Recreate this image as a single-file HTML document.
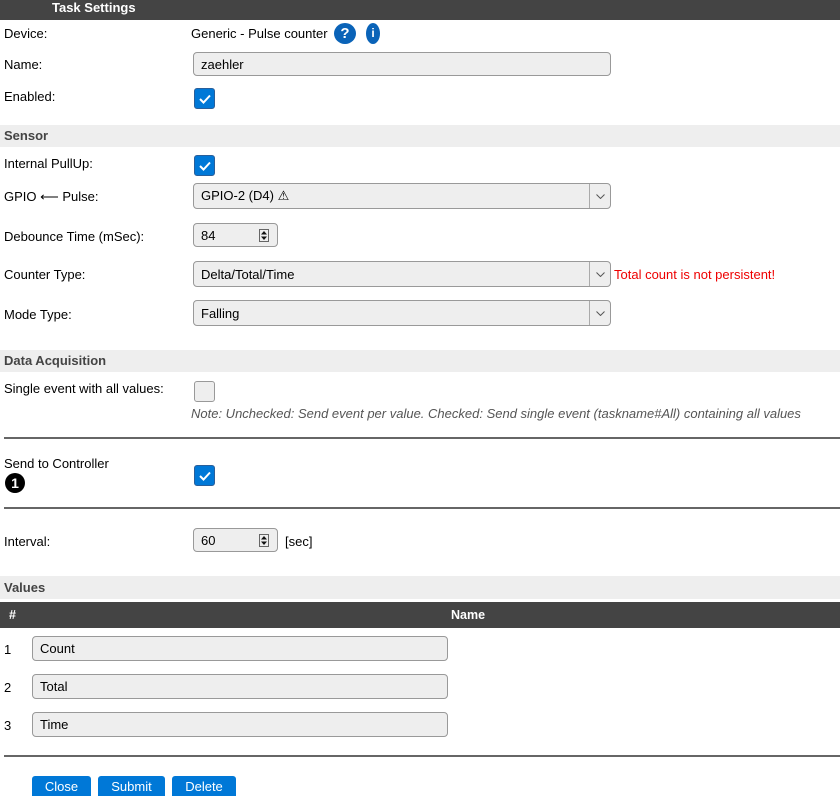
<!DOCTYPE html>
<html><head><meta charset="utf-8"><style>
*{box-sizing:border-box;margin:0;padding:0}
body{width:840px;height:795px;overflow:hidden;background:#fff;font-family:"Liberation Sans",sans-serif;font-size:13px;color:#000;position:relative}
.a{position:absolute}
.hdr{left:0;width:840px;background:#444;color:#fff;font-weight:bold}
.sec{left:0;width:840px;background:#eee;color:#444;font-weight:bold;padding-left:4px}
.inp{background:#eee;border:1px solid #999;border-radius:4px;padding-left:7px;display:flex;align-items:center}
.cb{width:21px;height:21px;border-radius:3px;background:#0078d7;border:1px solid #2a5f9a;display:flex;align-items:center;justify-content:center}
.sel .arr{position:absolute;right:0;top:0;bottom:0;width:21px;border-left:1px solid #aaa;display:flex;align-items:center;justify-content:center}
.hr{left:4px;width:836px;height:2px;background:#666}
.btn{background:#0078d7;color:#fff;border-radius:3px 3px 0 0;text-align:center;font-size:13px;padding-top:3px;height:20px}
.spin{position:absolute;right:8px;top:5px}
</style></head><body>
<div class="a hdr" style="top:0;height:20px;padding:0 0 0 52px;line-height:16px;font-size:13px">Task Settings</div>
<div class="a" style="left:4px;top:26px">Device:</div>
<div class="a" style="left:191px;top:26px">Generic - Pulse counter</div>
<div class="a" style="left:334px;top:23px;width:22px;height:21px;border-radius:50%;background:#0a63b8;color:#fff;font-weight:bold;font-size:15px;text-align:center;line-height:21px">?</div>
<div class="a" style="left:366px;top:23px;width:14px;height:21px;border-radius:50%;background:#0a63b8;color:#fff;font-weight:bold;font-size:12px;text-align:center;line-height:21px">i</div>
<div class="a" style="left:4px;top:57px">Name:</div>
<div class="a inp" style="left:193px;top:52px;width:418px;height:24px">zaehler</div>
<div class="a" style="left:4px;top:89px">Enabled:</div>
<div class="a cb" style="left:194px;top:88px"><svg width="12" height="10"><path d="M1 5l3.5 3.5L11 1.5" stroke="#fff" stroke-width="2" fill="none"/></svg></div>
<div class="a sec" style="top:125px;height:22px;line-height:22px">Sensor</div>
<div class="a" style="left:4px;top:156px">Internal PullUp:</div>
<div class="a cb" style="left:194px;top:155px"><svg width="12" height="10"><path d="M1 5l3.5 3.5L11 1.5" stroke="#fff" stroke-width="2" fill="none"/></svg></div>
<div class="a" style="left:4px;top:189px">GPIO ⟵ Pulse:</div>
<div class="a inp sel" style="left:193px;top:183px;width:418px;height:26px">GPIO-2 (D4) ⚠<div class="arr"><svg width="9" height="5"><path d="M0.5 0.5l4 4 4-4" stroke="#555" fill="none"/></svg></div></div>
<div class="a" style="left:4px;top:229px">Debounce Time (mSec):</div>
<div class="a inp" style="left:193px;top:223px;width:85px;height:24px">84<svg class="spin" width="10" height="13"><rect x="0.5" y="0.5" width="9" height="12" fill="#eee" stroke="#666"/><path d="M2 5.5h6L5 2zM2 7.5h6L5 11z" fill="#111"/></svg></div>
<div class="a" style="left:4px;top:267px">Counter Type:</div>
<div class="a inp sel" style="left:193px;top:261px;width:418px;height:26px">Delta/Total/Time<div class="arr"><svg width="9" height="5"><path d="M0.5 0.5l4 4 4-4" stroke="#555" fill="none"/></svg></div></div>
<div class="a" style="left:614px;top:267px;color:#e00">Total count is not persistent!</div>
<div class="a" style="left:4px;top:307px">Mode Type:</div>
<div class="a inp sel" style="left:193px;top:300px;width:418px;height:26px">Falling<div class="arr"><svg width="9" height="5"><path d="M0.5 0.5l4 4 4-4" stroke="#555" fill="none"/></svg></div></div>
<div class="a sec" style="top:350px;height:22px;line-height:22px">Data Acquisition</div>
<div class="a" style="left:4px;top:381px">Single event with all values:</div>
<div class="a" style="left:194px;top:381px;width:21px;height:21px;border-radius:3px;background:#eee;border:1px solid #999"></div>
<div class="a" style="left:191px;top:406px;color:#555;font-style:italic">Note: Unchecked: Send event per value. Checked: Send single event (taskname#All) containing all values</div>
<div class="a hr" style="top:437px"></div>
<div class="a" style="left:4px;top:456px">Send to Controller</div>
<div class="a" style="left:5px;top:473px;width:20px;height:20px;border-radius:50%;background:#000;color:#fff;font-weight:bold;font-size:14px;text-align:center;line-height:20px">1</div>
<div class="a cb" style="left:194px;top:465px"><svg width="12" height="10"><path d="M1 5l3.5 3.5L11 1.5" stroke="#fff" stroke-width="2" fill="none"/></svg></div>
<div class="a hr" style="top:507px"></div>
<div class="a" style="left:4px;top:534px">Interval:</div>
<div class="a inp" style="left:193px;top:528px;width:85px;height:24px">60<svg class="spin" width="10" height="13"><rect x="0.5" y="0.5" width="9" height="12" fill="#eee" stroke="#666"/><path d="M2 5.5h6L5 2zM2 7.5h6L5 11z" fill="#111"/></svg></div>
<div class="a" style="left:285px;top:534px">[sec]</div>
<div class="a sec" style="top:576px;height:23px;line-height:23px">Values</div>
<div class="a hdr" style="top:602px;height:26px;line-height:26px;font-size:12.5px"><span class="a" style="left:9px">#</span><span class="a" style="left:451px">Name</span></div>
<div class="a" style="left:4px;top:642px">1</div>
<div class="a inp" style="left:32px;top:636px;width:416px;height:25px">Count</div>
<div class="a" style="left:4px;top:680px">2</div>
<div class="a inp" style="left:32px;top:674px;width:416px;height:25px">Total</div>
<div class="a" style="left:4px;top:718px">3</div>
<div class="a inp" style="left:32px;top:712px;width:416px;height:25px">Time</div>
<div class="a hr" style="top:755px"></div>
<div class="a btn" style="left:32px;top:776px;width:59px">Close</div>
<div class="a btn" style="left:98px;top:776px;width:67px">Submit</div>
<div class="a btn" style="left:172px;top:776px;width:64px">Delete</div>
</body></html>
